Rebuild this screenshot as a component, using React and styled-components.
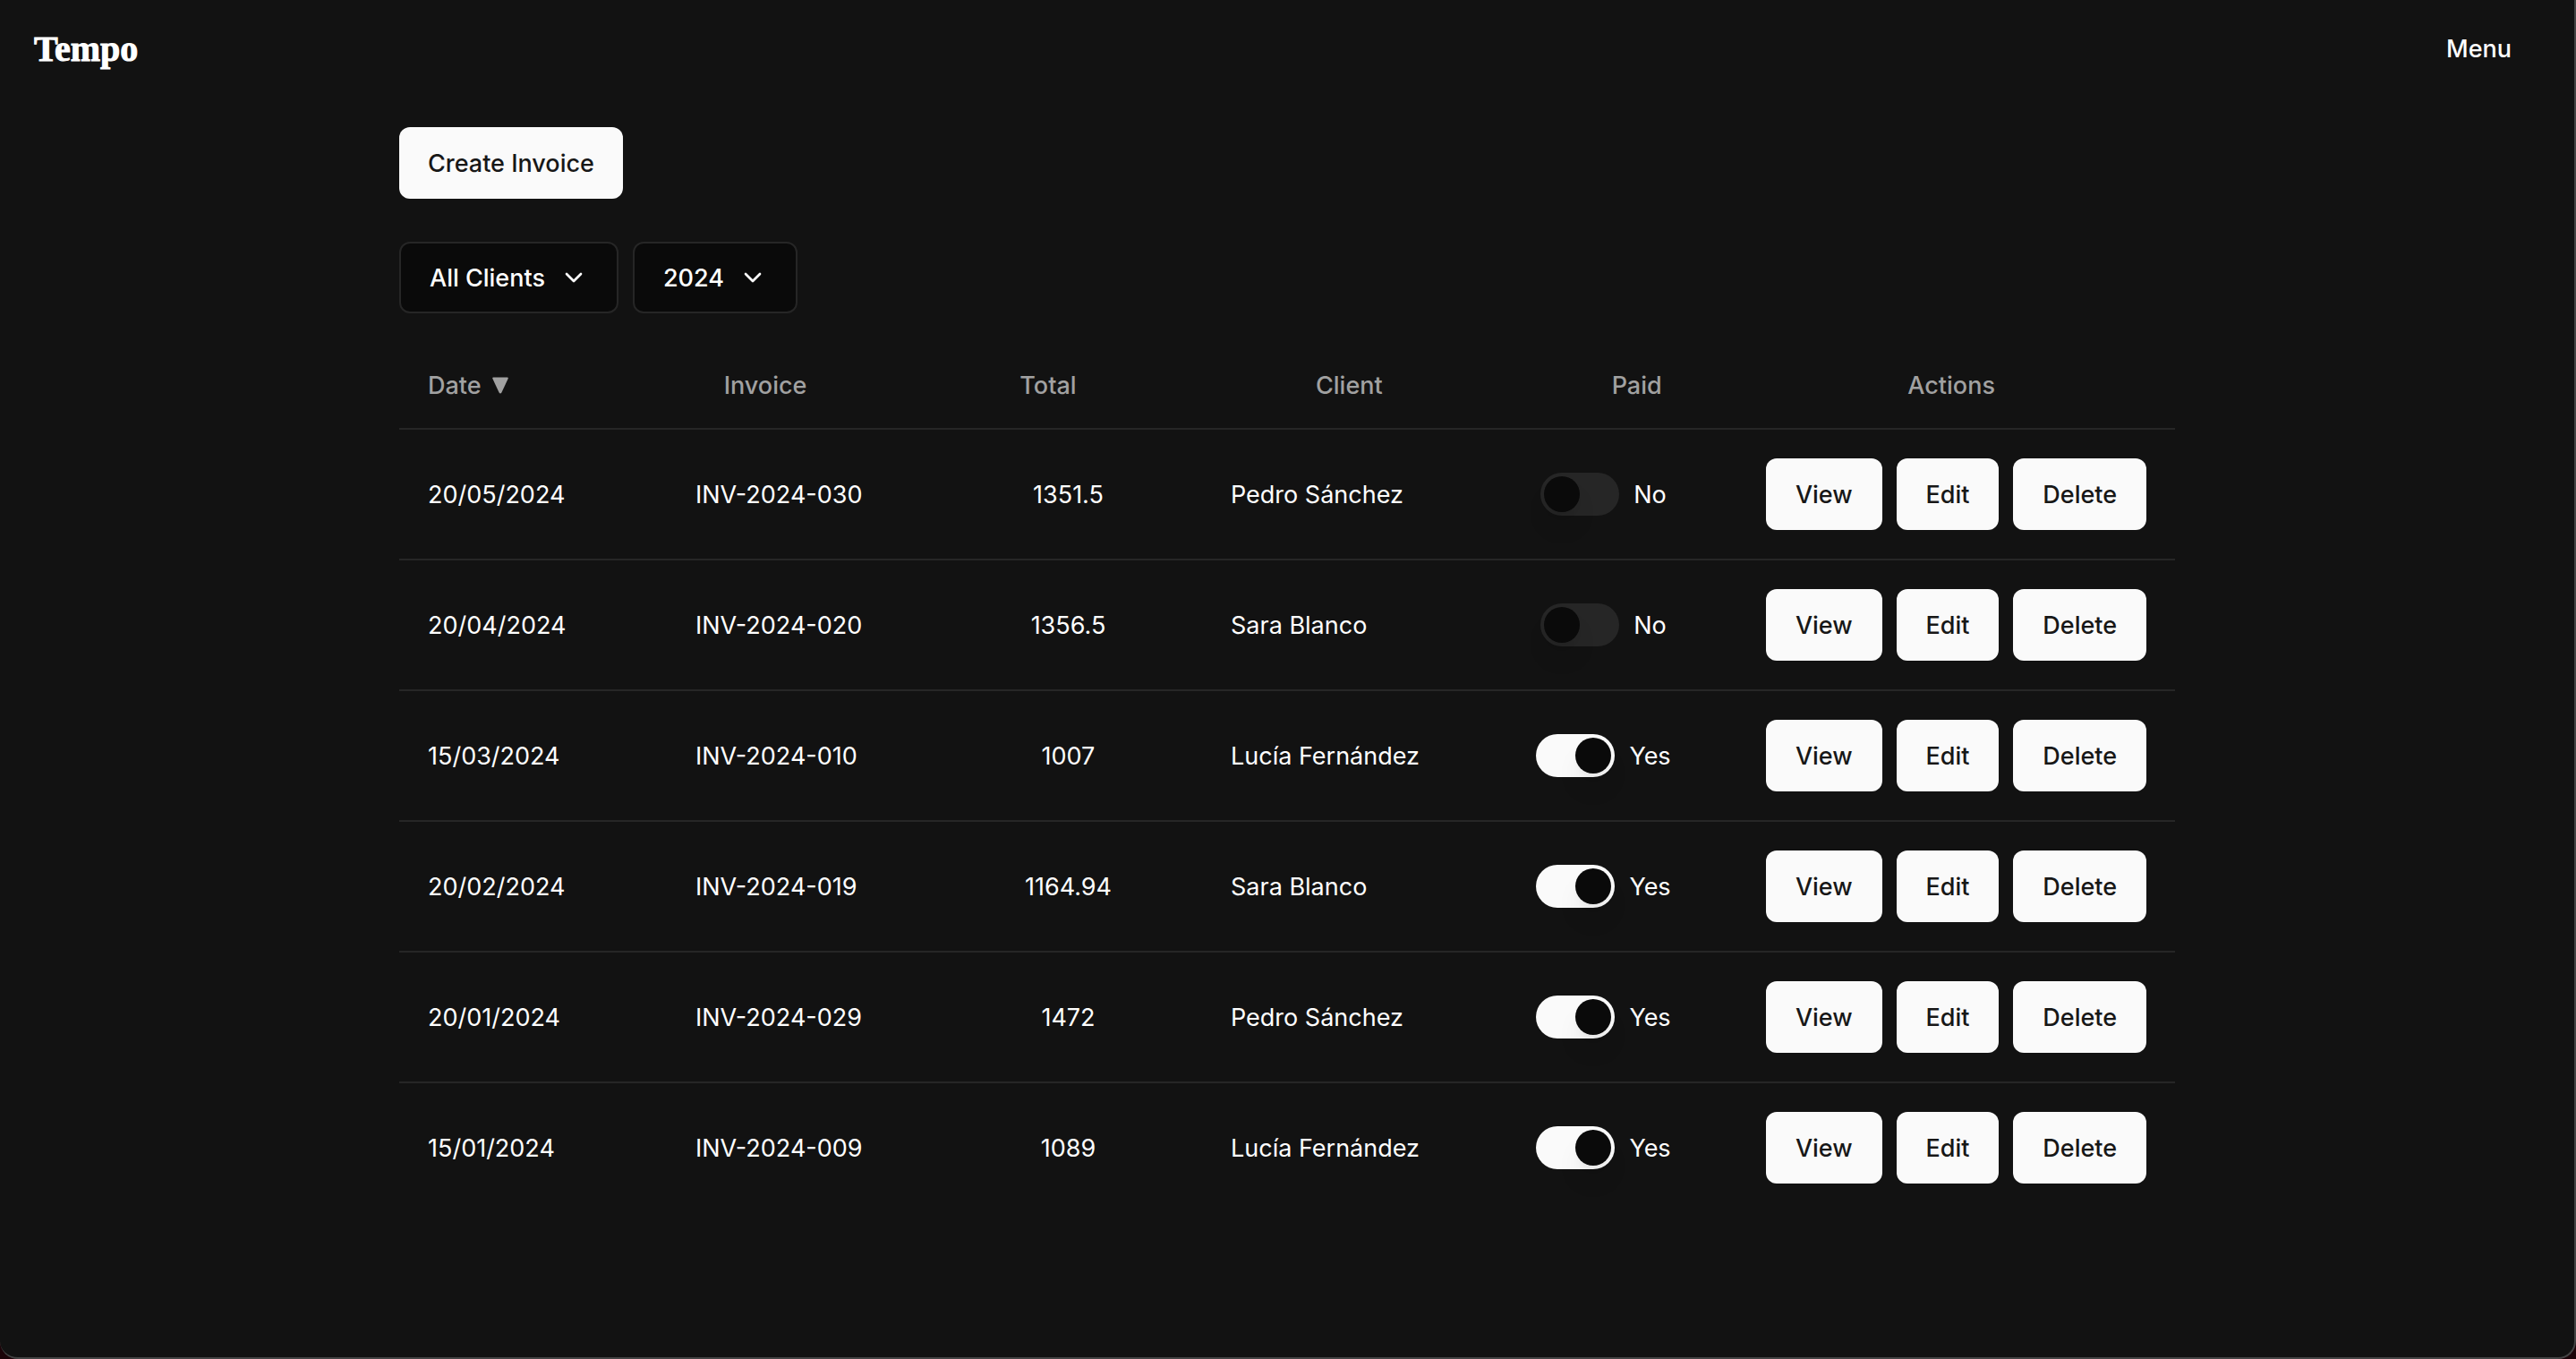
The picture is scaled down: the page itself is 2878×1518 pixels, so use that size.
import React, { useState } from "react";
import styled, { createGlobalStyle } from "styled-components";
import { ChevronDown } from "lucide-react";

const GlobalStyle = createGlobalStyle`
  *, *::before, *::after { box-sizing: border-box; }
  html { background: #1c0409; }
  body {
    margin: 0;
    color: #ffffff;
    font-family: Inter, "Noto Sans", sans-serif;
    font-size: 27px;
    line-height: 41px;
  }
  button, select, input { font: inherit; color: inherit; }
`;

const Frame = styled.div`
  min-height: 100vh;
  border: solid #444444;
  border-width: 0 2px 2px 0;
  border-radius: 0 0 20px 20px;
  background: #121212;
`;

const Header = styled.header`
  display: flex;
  align-items: center;
  justify-content: space-between;
  height: 108px;
  padding: 0 38px;
`;

const Brand = styled.a`
  font-family: "Liberation Serif", serif;
  font-size: 40px;
  font-weight: 700;
  color: #ffffff;
  text-decoration: none;
  -webkit-text-stroke: 1px #ffffff;
`;

const MenuButton = styled.button`
  padding: 16px 32px;
  border: 0;
  background: transparent;
  font-weight: 500;
`;

const Main = styled.main`
  display: flex;
  flex-direction: column;
  align-items: flex-start;
  max-width: 2048px;
  margin: 0 auto;
  padding: 34px 32px;
`;

const SolidButton = styled.button`
  height: 80px;
  padding: 0 32px;
  border: 0;
  border-radius: 12px;
  background: #fafafa;
  color: #171717;
  font-weight: 500;
`;

const Filters = styled.div`
  display: flex;
  gap: 16px;
  margin: 48px 0 32px;
`;

const SelectBox = styled.div`
  display: grid;
  align-items: center;

  > * { grid-area: 1 / 1; }

  svg {
    justify-self: end;
    margin-right: 34px;
    pointer-events: none;
  }
`;

const Select = styled.select`
  height: 80px;
  padding: 0 80px 0 32px;
  border: 2px solid #262626;
  border-radius: 12px;
  background: #0a0a0a;
  font-weight: 500;
  appearance: none;
  field-sizing: content;
`;

const Table = styled.table`
  display: block;
  width: 100%;
`;

const TableHead = styled.thead`
  display: block;
  color: #a1a1a1;

  tr {
    display: grid;
    grid-template-columns: repeat(6, 1fr);
    border-bottom: 2px solid #262626;
  }
`;

const HeadCell = styled.th`
  display: flex;
  align-items: center;
  gap: 12px;
  height: 96px;
  padding: 0 32px;
  font-weight: 500;
`;

const TableBody = styled.tbody`
  display: block;
`;

const Row = styled.tr`
  display: grid;
  grid-template-columns: repeat(5, 1fr) 489px;

  & + & { border-top: 2px solid #262626; }
`;

const Cell = styled.td`
  display: flex;
  align-items: center;
  justify-content: ${(p) => (p.$center ? "center" : "flex-start")};
  gap: 16px;
  padding: 32px;

  ${SolidButton} { flex: 1 1 auto; }
`;

const SwitchLabel = styled.label`
  display: flex;
  align-items: center;
  gap: 16px;
`;

const Switch = styled.input`
  display: flex;
  flex: none;
  width: 88px;
  height: 48px;
  margin: 0;
  padding: 4px;
  border-radius: 24px;
  background: #262626;
  appearance: none;

  &::before {
    content: "";
    width: 40px;
    height: 40px;
    border-radius: 50%;
    background: #0a0a0a;
    box-shadow: 0 20px 30px -6px rgba(0, 0, 0, 0.1), 0 8px 12px -8px rgba(0, 0, 0, 0.1);
  }

  &:checked {
    justify-content: flex-end;
    background: #fafafa;
  }
`;

const INVOICES = [
  { date: "20/05/2024", number: "INV-2024-030", total: "1351.5", client: "Pedro Sánchez", paid: false },
  { date: "20/04/2024", number: "INV-2024-020", total: "1356.5", client: "Sara Blanco", paid: false },
  { date: "15/03/2024", number: "INV-2024-010", total: "1007", client: "Lucía Fernández", paid: true },
  { date: "20/02/2024", number: "INV-2024-019", total: "1164.94", client: "Sara Blanco", paid: true },
  { date: "20/01/2024", number: "INV-2024-029", total: "1472", client: "Pedro Sánchez", paid: true },
  { date: "15/01/2024", number: "INV-2024-009", total: "1089", client: "Lucía Fernández", paid: true },
];

function FilterSelect({ label, options }) {
  return (
    <SelectBox>
      <Select aria-label={label}>
        {options.map((option) => (
          <option key={option}>{option}</option>
        ))}
      </Select>
      <ChevronDown size={32} />
    </SelectBox>
  );
}

function SortArrow() {
  return (
    <svg width="18" height="19" viewBox="0 0 18 19" fill="currentColor" aria-hidden="true">
      <path d="M1.2 0.5H16.8Q18.2 0.5 17.6 2L10.4 17.6Q9 19.4 7.6 17.6L0.4 2Q-0.2 0.5 1.2 0.5Z" />
    </svg>
  );
}

function InvoiceRow({ invoice }) {
  const [paid, setPaid] = useState(invoice.paid);
  return (
    <Row>
      <Cell>{invoice.date}</Cell>
      <Cell>{invoice.number}</Cell>
      <Cell $center>{invoice.total}</Cell>
      <Cell>{invoice.client}</Cell>
      <Cell $center>
        <SwitchLabel>
          <Switch
            type="checkbox"
            role="switch"
            checked={paid}
            onChange={(event) => setPaid(event.target.checked)}
          />
          {paid ? "Yes" : "No"}
        </SwitchLabel>
      </Cell>
      <Cell>
        <SolidButton type="button">View</SolidButton>
        <SolidButton type="button">Edit</SolidButton>
        <SolidButton type="button">Delete</SolidButton>
      </Cell>
    </Row>
  );
}

export default function App() {
  return (
    <>
      <GlobalStyle />
      <Frame>
        <Header>
          <Brand href="#">Tempo</Brand>
          <MenuButton type="button">Menu</MenuButton>
        </Header>
        <Main>
          <SolidButton type="button">Create Invoice</SolidButton>
          <Filters>
            <FilterSelect label="Client" options={["All Clients", "Pedro Sánchez", "Sara Blanco", "Lucía Fernández"]} />
            <FilterSelect label="Year" options={["2024", "2023"]} />
          </Filters>
          <Table>
            <TableHead>
              <tr>
                <HeadCell scope="col">Date <SortArrow /></HeadCell>
                <HeadCell scope="col">Invoice</HeadCell>
                <HeadCell scope="col">Total</HeadCell>
                <HeadCell scope="col">Client</HeadCell>
                <HeadCell scope="col">Paid</HeadCell>
                <HeadCell scope="col">Actions</HeadCell>
              </tr>
            </TableHead>
            <TableBody>
              {INVOICES.map((invoice) => (
                <InvoiceRow key={invoice.number} invoice={invoice} />
              ))}
            </TableBody>
          </Table>
        </Main>
      </Frame>
    </>
  );
}
